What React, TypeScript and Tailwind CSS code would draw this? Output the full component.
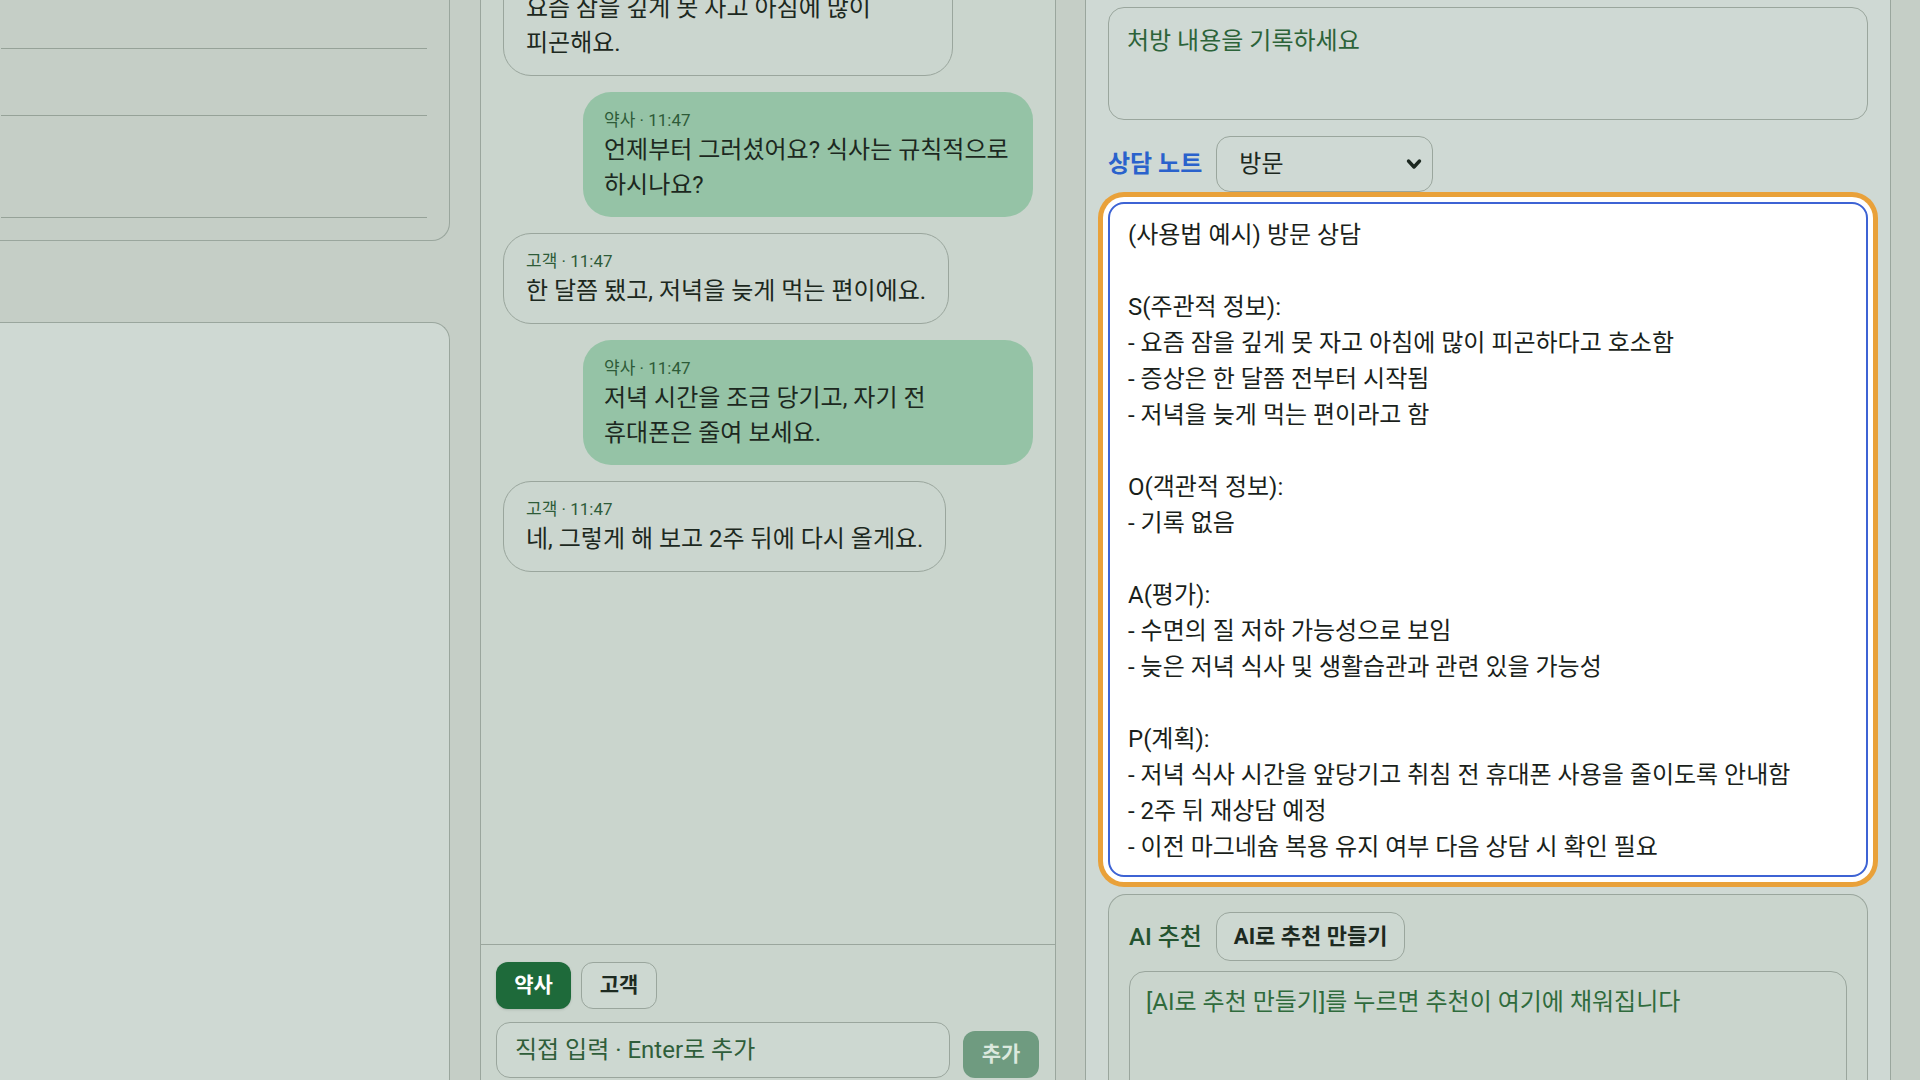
import { useState } from 'react';

const FONT = { fontFamily: "Roboto, 'Noto Sans CJK KR', 'Noto Sans', sans-serif" };

type Msg = { who: '약사' | '고객'; time: string; text: string };

const messages: Msg[] = [
  { who: '고객', time: '11:46', text: '요즘 잠을 깊게 못 자고 아침에 많이 피곤해요.' },
  { who: '약사', time: '11:47', text: '언제부터 그러셨어요? 식사는 규칙적으로 하시나요?' },
  { who: '고객', time: '11:47', text: '한 달쯤 됐고, 저녁을 늦게 먹는 편이에요.' },
  { who: '약사', time: '11:47', text: '저녁 시간을 조금 당기고, 자기 전 휴대폰은 줄여 보세요.' },
  { who: '고객', time: '11:47', text: '네, 그렇게 해 보고 2주 뒤에 다시 올게요.' },
];

const noteText = `(사용법 예시) 방문 상담

S(주관적 정보):
- 요즘 잠을 깊게 못 자고 아침에 많이 피곤하다고 호소함
- 증상은 한 달쯤 전부터 시작됨
- 저녁을 늦게 먹는 편이라고 함

O(객관적 정보):
- 기록 없음

A(평가):
- 수면의 질 저하 가능성으로 보임
- 늦은 저녁 식사 및 생활습관과 관련 있을 가능성

P(계획):
- 저녁 식사 시간을 앞당기고 취침 전 휴대폰 사용을 줄이도록 안내함
- 2주 뒤 재상담 예정
- 이전 마그네슘 복용 유지 여부 다음 상담 시 확인 필요`;

function Bubble({ msg }: { msg: Msg }) {
  const mine = msg.who === '약사';
  return (
    <div className={mine ? 'flex justify-end' : 'flex justify-start'}>
      <div
        className={
          mine
            ? 'max-w-[450px] break-keep rounded-[28px] bg-[#95c3a6] px-[21px] pt-[17px] pb-[14px]'
            : 'max-w-[450px] break-keep rounded-[28px] border border-[#9aa69d] bg-[#cbd6cf] px-[22px] pt-[16px] pb-[14px]'
        }
      >
        <div className="text-[17px] leading-[22px] text-[#2e5b38]">
          {msg.who} · {msg.time}
        </div>
        <div className="mt-[2px] text-[24px] leading-[35px] text-[#1c2820]">{msg.text}</div>
      </div>
    </div>
  );
}

function ChatPanel() {
  const [who, setWho] = useState<'약사' | '고객'>('약사');
  return (
    <div className="flex h-screen w-[576px] shrink-0 flex-col border-x border-[#9aa69d] bg-[#cad5cd]">
      <div className="flex-1 overflow-hidden px-[22px]">
        <div className="mt-[-50px] flex flex-col gap-4">
          {messages.map((m, i) => (
            <Bubble key={i} msg={m} />
          ))}
        </div>
      </div>
      <div className="h-[136px] shrink-0 overflow-hidden border-t border-[#9aa69d] pt-[17px] pl-[15px] pr-[16px]">
        <div className="flex gap-[10px]">
          {(['약사', '고객'] as const).map((w) => (
            <button
              key={w}
              onClick={() => setWho(w)}
              className={
                who === w
                  ? 'h-[47px] w-[75px] rounded-[12px] bg-[#1e6a3a] text-[21px] font-bold text-white shadow-sm'
                  : 'h-[47px] w-[76px] rounded-[12px] border border-[#9aa69d] bg-[#cdd8d1] text-[21px] font-bold text-[#1d2a21]'
              }
            >
              {w}
            </button>
          ))}
        </div>
        <div className="mt-[13px] flex items-end gap-[13px]">
          <input
            placeholder="직접 입력 · Enter로 추가"
            className="h-[56px] min-w-0 flex-1 rounded-[14px] border border-[#9aa69d] bg-[#cdd8d1] px-[18px] text-[24px] text-[#1c2820] outline-none placeholder:text-[#2f5e3a]"
          />
          <button className="h-[47px] w-[76px] shrink-0 rounded-[12px] bg-[#6f9b80] text-[21px] font-bold text-[#dbe8de]">
            추가
          </button>
        </div>
      </div>
    </div>
  );
}

function LeftColumn() {
  return (
    <div className="ml-[-20px] flex h-screen w-[470px] shrink-0 flex-col">
      <div className="mt-[-40px] rounded-b-[18px] border border-t-0 border-[#9aa69d] bg-[#c5cec6] pl-[20px] pr-[22px] pb-[22px]">
        <div className="h-[89px] border-b border-[#96a298]" />
        <div className="h-[67px] border-b border-[#96a298]" />
        <div className="h-[102px] border-b border-[#96a298]" />
      </div>
      <div className="mt-[81px] flex-1 rounded-t-[18px] border border-b-0 border-[#9aa69d] bg-[#cfd9d3]" />
    </div>
  );
}

function RightPanel() {
  return (
    <div className="flex h-screen w-[806px] shrink-0 flex-col border-x border-[#9aa69d] bg-[#cfd9d4] px-[22px] pt-[7px]">
      <textarea
        readOnly
        placeholder="처방 내용을 기록하세요"
        className="h-[113px] shrink-0 resize-none rounded-[16px] border border-[#9aa69d] bg-[#cfd9d4] px-[18px] py-[17px] text-[24px] leading-[32px] outline-none placeholder:text-[#2c6339]"
      />
      <div className="mt-[16px] flex items-center gap-[14px]">
        <span className="text-[24px] font-bold text-[#2a62cc]">상담 노트</span>
        <div className="flex h-[56px] w-[217px] items-center justify-between rounded-[14px] border border-[#9aa69d] bg-[#cfd9d4] pl-[22px] pr-[10px]">
          <span className="text-[24px] text-[#1c2820]">방문</span>
          <svg width="16" height="14" viewBox="0 0 16 14">
            <path d="M2.5 4 L8 10 L13.5 4" fill="none" stroke="#1c2820" strokeWidth="3.4" strokeLinecap="round" strokeLinejoin="round" />
          </svg>
        </div>
      </div>
      <textarea
        readOnly
        defaultValue={noteText}
        className="mt-[10px] h-[675px] shrink-0 resize-none overflow-hidden rounded-[16px] border-2 border-[#3d63d4] bg-white px-[18px] pt-[13px] text-[24px] leading-[36px] text-[#1a1f1b] shadow-[0_0_0_5px_#ffffff,0_0_0_10px_#e9a13a] outline-none"
      />
      <div className="mt-[17px] flex-1 rounded-t-[18px] border border-b-0 border-[#9aa69d] bg-[#cad5cd] px-[20px] pt-[17px]">
        <div className="flex items-center gap-[14px]">
          <span className="text-[24px] font-medium text-[#24532f]">AI 추천</span>
          <button className="h-[49px] rounded-[14px] border border-[#9aa69d] bg-[#cdd8d1] px-[17px] text-[22px] font-bold text-[#1d2a21]">
            AI로 추천 만들기
          </button>
        </div>
        <textarea
          readOnly
          placeholder="[AI로 추천 만들기]를 누르면 추천이 여기에 채워집니다"
          className="mt-[10px] h-[140px] w-full resize-none rounded-[16px] border border-[#9aa69d] bg-[#cad5cd] px-[16px] pt-[14px] text-[24px] leading-[32px] outline-none placeholder:text-[#2f6b3c]"
        />
      </div>
    </div>
  );
}

export default function App() {
  return (
    <div style={FONT} className="flex h-screen w-full gap-[30px] overflow-hidden bg-[#c5cec6]">
      <LeftColumn />
      <div className="flex gap-[29px]">
        <ChatPanel />
        <RightPanel />
      </div>
    </div>
  );
}
